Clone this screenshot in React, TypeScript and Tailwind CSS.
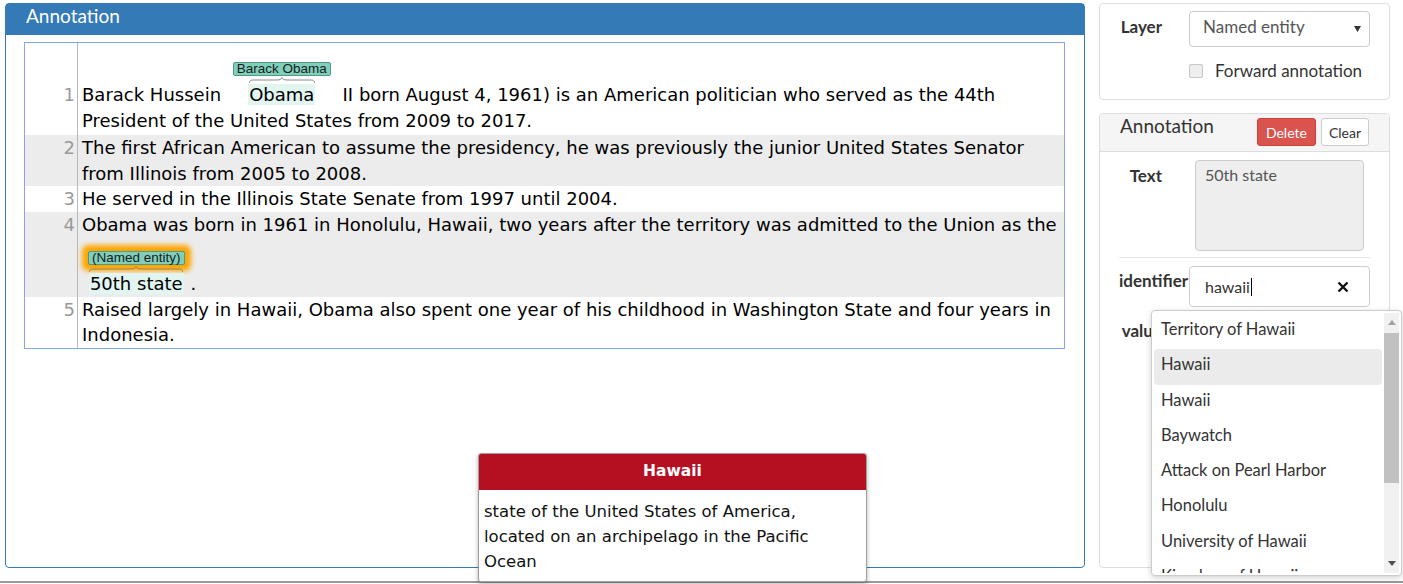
import React from "react";

const Brace: React.FC<{ width: number; color: string }> = ({ width, color }) => {
  const m = width / 2;
  const d = `M0.5 7 C0.5 4.5 1.5 4 5 4 L${m - 5} 4 C${m - 2} 4 ${m} 3 ${m} 1.5 C${m} 3 ${m + 2} 4 ${m + 5} 4 L${width - 5} 4 C${width - 1.5} 4 ${width - 0.5} 4.5 ${width - 0.5} 7`;
  return (
    <svg width={width} height={8} viewBox={`0 0 ${width} 8`} className="mx-auto block">
      <path d={d} fill="none" stroke={color} strokeWidth={1} />
    </svg>
  );
};

type SpanProps = {
  label: string;
  word: string;
  braceWidth: number;
  braceColor: string;
  padTop: string;
  glow?: boolean;
};

const Span: React.FC<SpanProps> = ({ label, word, braceWidth, braceColor, padTop, glow }) => (
  <span className={`mx-[6px] inline-block ${padTop}`}>
    <span
      className={`block rounded-[2px] border border-[#4f9986] bg-[#80cfba] px-[3px] font-['Liberation_Sans',Arial,sans-serif] text-[13.5px] leading-[12px] text-[#1a1a1a] ${
        glow ? "shadow-[0_0_5px_6px_#ffa500]" : ""
      }`}
    >
      {label}
    </span>
    <Brace width={braceWidth} color={braceColor} />
    <span className="mx-auto block w-fit bg-[#e3f5f1] px-px leading-[21px]">{word}</span>
  </span>
);

const Row: React.FC<{ n: number; gray?: boolean; extra?: string; children: React.ReactNode }> = ({
  n,
  gray,
  extra,
  children,
}) => (
  <div className={`flex items-baseline ${gray ? "bg-[#ececec]" : ""}`}>
    <div className="w-[52px] shrink-0 pr-[2px] text-right text-[#999]">{n}</div>
    <div className={`flex-1 border-l border-[#b9b9b9] pl-[4px] ${extra ?? ""}`}>{children}</div>
  </div>
);

const AnnotationPanel: React.FC = () => (
  <div className="flex w-[1080px] flex-col rounded-[4px] border border-[#337ab7]">
    <div className="h-[31px] bg-[#337ab7] pl-[20px] font-['Lato',sans-serif] text-[19px] leading-[23px] text-white">
      Annotation
    </div>
    <div className="pl-[18px] pr-[19px] pt-[7px]">
      <div className="border border-[#80a6f4] font-['DejaVu_Sans',sans-serif] text-[18px] leading-[25.5px] text-black">
        <Row n={1} extra="pb-[2px]">
          <div className="whitespace-nowrap">
            Barack Hussein{" "}
            <Span
              label="Barack Obama"
              word="Obama"
              braceWidth={66}
              braceColor="#8c8c8c"
              padTop="pt-[19px]"
            />{" "}
            II born August 4, 1961) is an American politician who served as the 44th
          </div>
          <div className="whitespace-nowrap">President of the United States from 2009 to 2017.</div>
        </Row>
        <Row n={2} gray>
          <div className="whitespace-nowrap">
            The first African American to assume the presidency, he was previously the junior United States Senator
          </div>
          <div className="whitespace-nowrap">from Illinois from 2005 to 2008.</div>
        </Row>
        <Row n={3}>
          <div className="whitespace-nowrap">He served in the Illinois State Senate from 1997 until 2004.</div>
        </Row>
        <Row n={4} gray>
          <div className="whitespace-nowrap">
            Obama was born in 1961 in Honolulu, Hawaii, two years after the territory was admitted to the Union as the
          </div>
          <div className="whitespace-nowrap">
            <Span
              label="(Named entity)"
              word="50th state"
              braceWidth={94}
              braceColor="#9a8447"
              padTop="pt-[14px]"
              glow
            />
            .
          </div>
        </Row>
        <Row n={5}>
          <div className="whitespace-nowrap">
            Raised largely in Hawaii, Obama also spent one year of his childhood in Washington State and four years in
          </div>
          <div className="whitespace-nowrap">Indonesia.</div>
        </Row>
      </div>
    </div>
  </div>
);

const Sidebar: React.FC = () => (
  <div className="flex w-[291px] flex-col gap-[13px] font-['Lato',sans-serif] text-[17px] text-[#333]">
    <div className="h-[97px] rounded-[4px] border border-[#dddddd] pt-[7px]">
      <div className="flex items-start">
        <div className="mt-[3px] w-[62px] shrink-0 pl-[19px] text-right font-bold">Layer</div>
        <div className="ml-[27px] flex h-[36px] w-[181px] items-start justify-between rounded-[4px] border border-[#cccccc] pl-[13px] pr-[8px] pt-[2px] text-[#555]">
          <span>Named entity</span>
          <svg width="7" height="6" className="mt-[12px]">
            <polygon points="0,0 7,0 3.5,6" fill="#333" />
          </svg>
        </div>
      </div>
      <div className="ml-[89px] mt-[11px] flex items-start gap-[12px]">
        <span className="mt-[6px] h-[14px] w-[14px] rounded-[2px] border border-[#c8c8c8] bg-[#eeeeee]" />
        <span>Forward annotation</span>
      </div>
    </div>

    <div className="flex flex-1 flex-col rounded-[4px] border border-[#dddddd]">
      <div className="flex h-[38px] items-start justify-between rounded-t-[4px] border-b border-[#dddddd] bg-[#f5f5f5] px-[20px]">
        <span className="text-[19px] leading-[24px]">Annotation</span>
        <div className="flex gap-[5px] pt-[4px]">
          <button className="h-[28px] rounded-[3px] border border-[#d43f3a] bg-[#d9534f] px-[8px] text-[14px] text-white">
            Delete
          </button>
          <button className="h-[28px] rounded-[3px] border border-[#cccccc] bg-white px-[7px] text-[14px] text-[#333]">
            Clear
          </button>
        </div>
      </div>
      <div className="pt-[8px]">
        <div className="flex items-start">
          <div className="mt-[5px] w-[62px] shrink-0 pl-[19px] text-right font-bold leading-[22px]">Text</div>
          <div className="ml-[33px] h-[91px] w-[169px] rounded-[4px] border border-[#cccccc] bg-[#eeeeee] pl-[9px] pt-[3px] text-[16px] leading-[22px] text-[#555]">
            50th state
          </div>
        </div>
        <div className="ml-[19px] mt-[6px] h-px w-[251px] bg-[#e5e5e5]" />
        <div className="mt-[8px] flex items-start">
          <div className="mt-[4px] w-[62px] shrink-0 whitespace-nowrap pl-[19px] text-right font-bold leading-[22px]">
            identifier
          </div>
          <div className="ml-[27px] flex h-[41px] w-[181px] items-center justify-between rounded-[4px] border border-[#cccccc] bg-white pl-[15px] pr-[20px] text-[16px] text-[#333]">
            <span className="flex items-center">
              hawaii
              <span className="ml-px inline-block h-[18px] w-px bg-black" />
            </span>
            <svg width="12" height="12" viewBox="0 0 12 12">
              <path d="M1.5 1.5 L10.5 10.5 M10.5 1.5 L1.5 10.5" stroke="#111" strokeWidth="2.4" />
            </svg>
          </div>
        </div>
        <div className="mt-[13px] w-[62px] pl-[19px] text-right font-bold leading-[22px]">value</div>
      </div>
    </div>
  </div>
);

const suggestions = [
  "Territory of Hawaii",
  "Hawaii",
  "Hawaii",
  "Baywatch",
  "Attack on Pearl Harbor",
  "Honolulu",
  "University of Hawaii",
  "Kingdom of Hawaii",
];

const Suggestions: React.FC = () => (
  <div className="absolute left-[1151px] top-[310px] flex h-[266px] w-[251px] gap-[2px] overflow-hidden rounded-[4px] border border-[#cccccc] bg-white p-[2px] font-['Lato',sans-serif] text-[16.5px] text-[#333] shadow-[0_2px_6px_rgba(0,0,0,0.18)]">
    <div className="flex-1 overflow-hidden pt-px">
      {suggestions.map((s, i) => (
        <div
          key={i}
          className={`h-[35.3px] shrink-0 rounded-[4px] pl-[7px] pt-[3px] ${i === 1 ? "bg-[#ebebeb]" : ""}`}
        >
          {s}
        </div>
      ))}
    </div>
    <div className="flex w-[15px] flex-col bg-[#f1f1f1]">
      <div className="flex h-[18px] items-center justify-center">
        <svg width="8" height="5">
          <polygon points="4,0 8,5 0,5" fill="#a3a3a3" />
        </svg>
      </div>
      <div className="mt-[2px] h-[150px] bg-[#c1c1c1]" />
      <div className="flex-1" />
      <div className="flex h-[20px] items-center justify-center">
        <svg width="8" height="5">
          <polygon points="0,0 8,0 4,5" fill="#505050" />
        </svg>
      </div>
    </div>
  </div>
);

const Tooltip: React.FC = () => (
  <div className="absolute left-[478px] top-[453px] h-[129px] w-[389px] overflow-hidden rounded-[3px] border border-[#a0a0a0] bg-white font-['DejaVu_Sans',sans-serif] shadow-[0_2px_4px_rgba(0,0,0,0.3)]">
    <div className="h-[36px] bg-[#b50f22] text-center text-[15.5px] font-bold leading-[34px] text-white">Hawaii</div>
    <div className="pl-[5px] pt-[9px] text-[16.5px] leading-[25px] text-[#111]">
      state of the United States of America,
      <br />
      located on an archipelago in the Pacific
      <br />
      Ocean
    </div>
  </div>
);

export default function App() {
  return (
    <div className="relative h-[584px] w-full overflow-hidden bg-white">
      <div className="flex h-[568px] gap-[14px] pl-[5px] pt-[3px]">
        <AnnotationPanel />
        <Sidebar />
      </div>
      <div className="mt-[13px] h-[2px] bg-[#999]" />
      <Tooltip />
      <Suggestions />
    </div>
  );
}
